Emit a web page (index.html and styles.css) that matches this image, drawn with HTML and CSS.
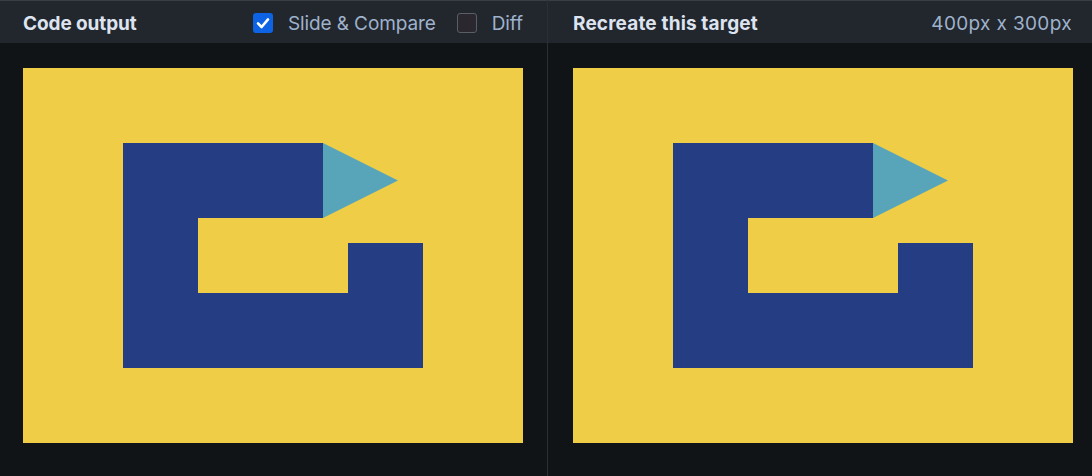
FILE: index.html
```html
<!DOCTYPE html>
<html>
<head>
<meta charset="utf-8">
<link rel="stylesheet" href="styles.css">
</head>
<body>
<div class="app">
  <section class="panel panel-left">
    <header class="bar">
      <span class="title">Code output</span>
      <div class="controls">
        <label class="check">
          <span class="box box-on">
            <svg viewBox="0 0 20 20" width="20" height="20"><path d="M5 10.4 L8.6 14 L15 6.4" fill="none" stroke="#ffffff" stroke-width="2.6" stroke-linecap="round" stroke-linejoin="round"/></svg>
          </span>
          <span class="label">Slide &amp; Compare</span>
        </label>
        <label class="check">
          <span class="box box-off"></span>
          <span class="label">Diff</span>
        </label>
      </div>
    </header>
    <div class="stage stage-left">
      <svg class="art" viewBox="0 0 400 300" width="500" height="375">
        <rect width="400" height="300" fill="#f0cd47"/>
        <path d="M80 60 H240 V120 H140 V180 H260 V140 H320 V240 H80 Z" fill="#243d83"/>
        <path d="M240 60 L300 90 L240 120 Z" fill="#58a5b9"/>
      </svg>
    </div>
  </section>
  <section class="panel panel-right">
    <header class="bar">
      <span class="title title-wide">Recreate this target</span>
      <span class="size">400px x 300px</span>
    </header>
    <div class="stage stage-right">
      <svg class="art" viewBox="0 0 400 300" width="500" height="375">
        <rect width="400" height="300" fill="#f0cd47"/>
        <path d="M80 60 H240 V120 H140 V180 H260 V140 H320 V240 H80 Z" fill="#243d83"/>
        <path d="M240 60 L300 90 L240 120 Z" fill="#58a5b9"/>
      </svg>
    </div>
  </section>
</div>
</body>
</html>
```

FILE: styles.css
```css
* { box-sizing: border-box; }
html, body { margin: 0; height: 100%; }
body {
  background: #111417;
  font-family: Inter, "Noto Sans", sans-serif;
  overflow: hidden;
}
.app {
  display: flex;
  height: 476px;
}
.panel {
  display: flex;
  flex-direction: column;
}
.panel-left {
  width: 548px;
  border-right: 1px solid #2b2f36;
}
.panel-right {
  flex: 1;
}
.bar {
  height: 43px;
  background: #22262d;
  border-top: 1px solid #3a3f47;
  padding-top: 2px;
  display: flex;
  align-items: center;
  justify-content: space-between;
}
.panel-left .bar { padding-left: 23px; padding-right: 24px; }
.panel-right .bar { padding-left: 25px; padding-right: 20px; }
.title {
  color: #dde4f0;
  font-weight: 700;
  font-size: 19px;
  letter-spacing: -0.1px;
}
.title-wide { letter-spacing: 0.15px; }
.controls {
  display: flex;
  align-items: center;
  gap: 21px;
}
.check {
  display: flex;
  align-items: center;
  gap: 15px;
}
.box {
  width: 20px;
  height: 20px;
  border-radius: 3px;
  display: block;
}
.box svg { display: block; }
.box-on { background: #0d63e4; }
.box-off { background: #2a282e; border: 1px solid #5b5e66; }
.label, .size {
  color: #9fb2cc;
  font-size: 19px;
  letter-spacing: -0.1px;
}
.size { letter-spacing: 0.35px; }
.stage {
  padding-top: 25px;
}
.stage-left { padding-left: 23px; }
.stage-right { padding-left: 25px; }
.art { display: block; }
```
